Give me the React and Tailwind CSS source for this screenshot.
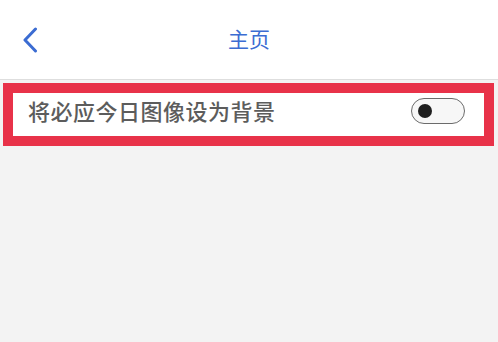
import React, { useState } from "react";

function Toggle({ on, onChange }) {
    return (
        <button
            onClick={() => onChange(!on)}
            className="w-[54px] h-[26px] rounded-full border border-[#6b6b6b] bg-[#f7f7f7] flex items-center px-[6px]"
        >
            <span className={`w-[14px] h-[14px] rounded-full bg-[#1f1f1f] ${on ? "ml-auto" : ""}`} />
        </button>
    );
}

export default function App() {
    const [enabled, setEnabled] = useState(false);

    return (
        <div
            className="w-[498px] h-[342px] bg-[#f3f3f3] flex flex-col"
            style={{ fontFamily: '"Noto Sans", "Noto Sans CJK SC", sans-serif' }}
        >
            {/* Header */}
            <div className="h-[80px] bg-white border-b border-[#dedede] flex items-center relative">
                <button className="ml-[20px] w-[20px] h-[30px] flex items-center justify-center">
                    <svg width="16" height="26" viewBox="0 0 16 26" fill="none">
                        <path d="M13.5 2 L3 13 L13.5 24" stroke="#3b6cd2" strokeWidth="3" strokeLinecap="round" strokeLinejoin="round" />
                    </svg>
                </button>
                <div className="absolute left-0 right-0 text-center text-[21px] text-[#3b6cd2] pointer-events-none">
                    主页
                </div>
            </div>

            {/* Setting row (highlighted) */}
            <div className="mt-[3px] ml-[3px] mr-[4px] border-[10px] border-[#e83249]">
                <div className="h-[43px] bg-white flex items-center justify-between pl-[15px] pr-[19px] pb-[7px]">
                    <span className="text-[22px] font-medium text-[#5c5c5c] tracking-[0.5px]">
                        将必应今日图像设为背景
                    </span>
                    <Toggle on={enabled} onChange={setEnabled} />
                </div>
            </div>
        </div>
    );
}
